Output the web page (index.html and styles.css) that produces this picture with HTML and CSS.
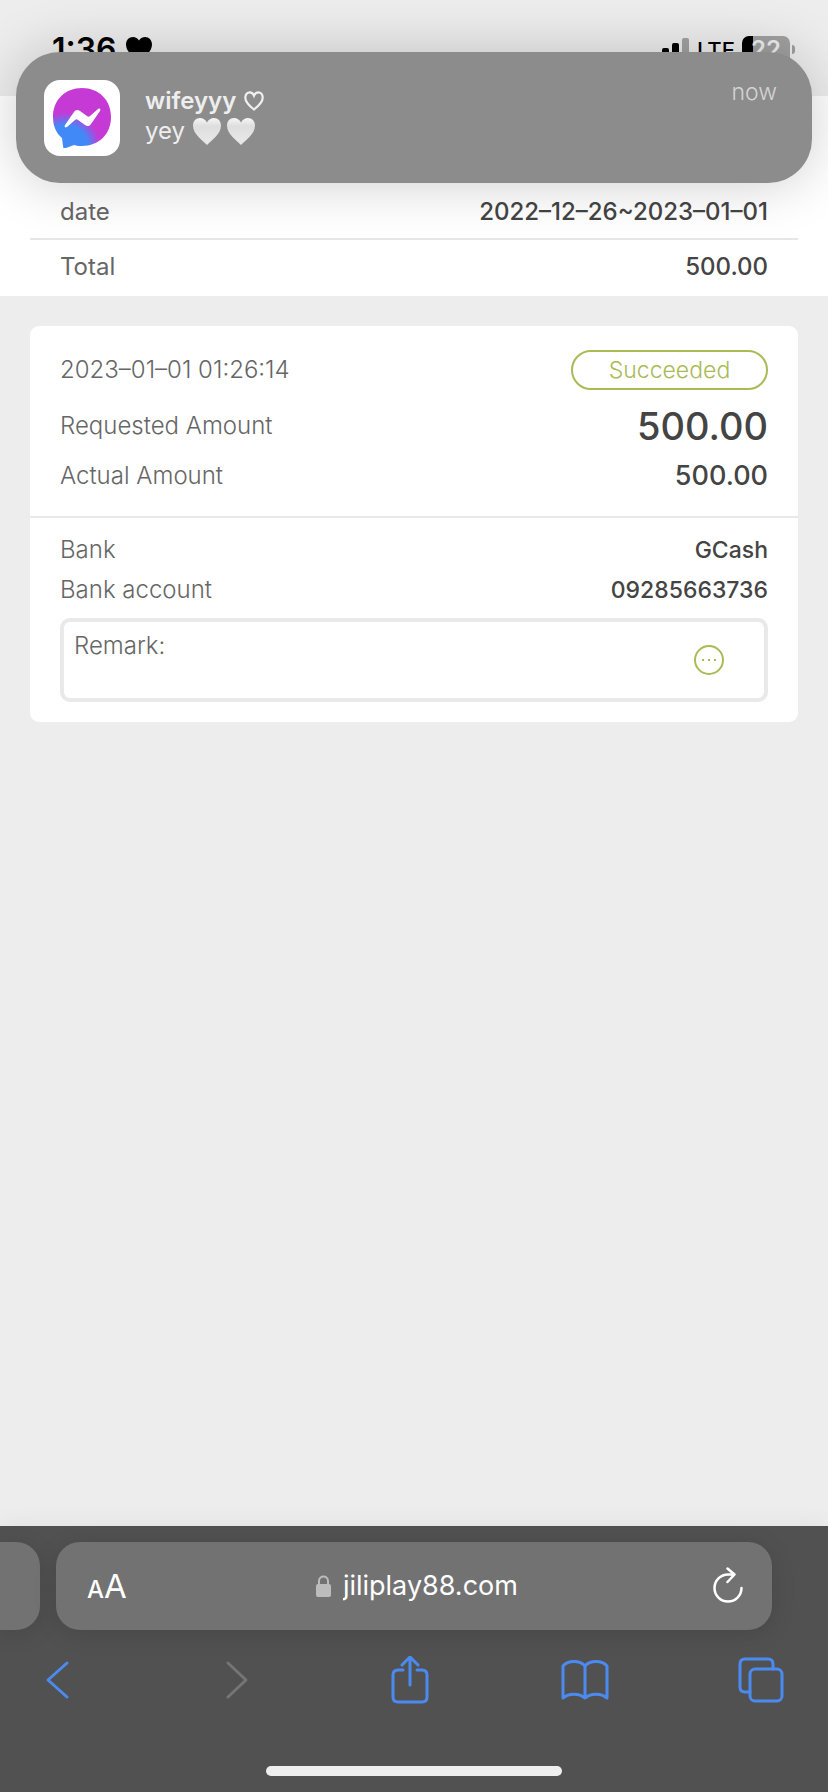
FILE: index.html
```html
<!DOCTYPE html>
<html lang="en">
<head>
  <meta charset="UTF-8">
  <meta name="viewport" content="width=device-width, initial-scale=1">
  <title>Withdrawal record</title>
  <link rel="stylesheet" href="styles.css">
</head>
<body>
  <header class="status-bar">
    <div class="status-left">
      <span class="time">1:36</span>
      <svg width="26" height="26" viewBox="0 0 26 26"><path d="M13 25C6 19 0 14 0 7.500C0 3 3 0 7 0c2.600 0 4.700 1.300 6 3.500C14.300 1.300 16.400 0 19 0c4 0 7 3 7 7.500C26 14 20 19 13 25z"/></svg>
    </div>
    <div class="status-right">
      <svg width="38" height="24" viewBox="0 0 38 24">
        <rect x="0" y="15" width="7" height="9" rx="2"/>
        <rect x="10" y="10" width="7" height="14" rx="2"/>
        <rect x="20" y="5" width="7" height="19" rx="2"/>
        <rect x="30" y="0" width="7" height="24" rx="2" fill="#a2a2a2"/>
      </svg>
      <span class="network">LTE</span>
      <div class="battery"><span>22</span></div>
    </div>
  </header>

  <aside class="notification">
    <div class="app-icon">
      <svg width="60" height="60" viewBox="0 0 60 60">
        <defs>
          <radialGradient id="bubble" cx="0.22" cy="1" r="0.700">
            <stop offset="0.550" stop-color="#4289f8"/>
            <stop offset="0.850" stop-color="#c53ad5"/>
          </radialGradient>
        </defs>
        <path d="M30 0C13 0 1 12 1 29c0 9 3 16 9 21l1 8c0 2 1 3 3 2l8-3c3 1 5 1 8 1c17 0 29-12 29-29S47 0 30 0z" fill="url(#bubble)"/>
        <path d="M13 37l9-13c1-2 4-3 6-1l7 5c1 1 2 1 3 0l8-7c2-1 3 0 2 2l-9 13c-1 2-4 3-6 1l-7-5c-1-1-2-1-3 0l-8 7c-2 1-3 0-2-2z" fill="#fff"/>
      </svg>
    </div>
    <div class="message">
      <div class="sender">wifeyyy
        <svg width="20" height="20" viewBox="0 0 20 20"><path d="M10 18.500C5 14.500 1.300 11 1.300 6.700c0-3.200 2-5.400 4.500-5.400c1.900 0 3.400 1.200 4.200 3.200c.8-2 2.300-3.200 4.200-3.200c2.500 0 4.500 2.200 4.500 5.400c0 4.300-3.700 7.800-8.700 11.800z" fill="none" stroke="#f0f0f0" stroke-width="2.200"/></svg>
      </div>
      <div class="text">yey
        <svg width="62" height="29" viewBox="0 0 62 29">
          <defs>
            <linearGradient id="heart" x1="0" y1="0" x2="0" y2="1">
              <stop offset="0" stop-color="#f6f6f6"/>
              <stop offset="0.300" stop-color="#dedede"/>
              <stop offset="1" stop-color="#e9e9e9"/>
            </linearGradient>
          </defs>
          <path d="M14 28C9 23 0 17 0 8.500C0 4 3 1 7 1c3 0 5.500 1.500 7 4.500C15.500 2.500 18 1 21 1c4 0 7 3 7 7.500C28 17 19 23 14 28z" fill="url(#heart)"/>
          <path d="M48 28C43 23 34 17 34 8.500C34 4 37 1 41 1c3 0 5.500 1.500 7 4.500C49.500 2.500 52 1 55 1c4 0 7 3 7 7.500C62 17 53 23 48 28z" fill="url(#heart)"/>
        </svg>
      </div>
    </div>
    <time class="when">now</time>
  </aside>

  <main>
    <section class="summary">
      <div class="summary-row">
        <span>date</span>
        <strong>2022–12–26~2023–01–01</strong>
      </div>
      <div class="summary-row">
        <span>Total</span>
        <strong>500.00</strong>
      </div>
    </section>

    <section class="card">
      <div class="amounts">
        <div class="row row-status">
          <time>2023–01–01 01:26:14</time>
          <span class="badge">Succeeded</span>
        </div>
        <div class="row row-requested">
          <span>Requested Amount</span>
          <strong class="big">500.00</strong>
        </div>
        <div class="row row-actual">
          <span>Actual Amount</span>
          <strong class="medium">500.00</strong>
        </div>
      </div>
      <div class="bank">
        <div class="row">
          <span>Bank</span>
          <strong>GCash</strong>
        </div>
        <div class="row">
          <span>Bank account</span>
          <strong>09285663736</strong>
        </div>
        <div class="remark">
          <span>Remark:</span>
          <button type="button" class="more" aria-label="Show remark">
            <svg width="30" height="30" viewBox="0 0 30 30">
              <circle cx="15" cy="15" r="14" fill="none" stroke="#a9ba56" stroke-width="2"/>
              <path d="M8 14h2v2H8zM14 14h2v2h-2zM20 14h2v2h-2z" fill="#a9ba56"/>
            </svg>
          </button>
        </div>
      </div>
    </section>
  </main>

  <footer class="browser-bar">
    <div class="tabs">
      <div class="prev-tab"></div>
      <div class="address-bar">
        <button type="button" class="text-size" aria-label="Page settings"><span class="small-a">A</span>A</button>
        <div class="address">
          <svg width="15" height="22" viewBox="0 0 15 22">
            <path d="M3 10V6c0-6 9-6 9 0v4" fill="none" stroke="#bcbcbc" stroke-width="2"/>
            <rect y="9" width="15" height="13" rx="2" fill="#bcbcbc"/>
          </svg>
          <input type="text" value="jiliplay88.com" aria-label="Address">
        </div>
        <button type="button" class="reload" aria-label="Reload">
          <svg width="32" height="38" viewBox="0 0 32 38" fill="none" stroke="#fff" stroke-width="2.500" stroke-linecap="round" stroke-linejoin="round">
            <path d="M22 7.500H16A13.500 13.500 0 1 0 29.500 21M15.500 1.500l7 6-7 7.500"/>
          </svg>
        </button>
      </div>
    </div>
    <nav class="toolbar">
      <button type="button" aria-label="Back">
        <svg width="48" height="48" viewBox="0 0 48 48"><path d="M34 7L15 24l19 17"/></svg>
      </button>
      <button type="button" aria-label="Forward" disabled>
        <svg width="48" height="48" viewBox="0 0 48 48"><path d="M19 7l18 17-18 17"/></svg>
      </button>
      <button type="button" aria-label="Share">
        <svg width="48" height="48" viewBox="0 0 48 48"><path d="M18 14h-5q-5 0-5 5v22q0 5 5 5h24q5 0 5-5V19q0-5-5-5h-5M25 29V2M17 9l8-8 8 8"/></svg>
      </button>
      <button type="button" aria-label="Bookmarks">
        <svg width="48" height="48" viewBox="0 0 48 48"><path d="M24 10C19 4 7 4 2 10v32c6-5 16-5 22 0 6-5 16-5 22 0V10C41 4 29 4 24 10zM24 10v32"/></svg>
      </button>
      <button type="button" aria-label="Tabs">
        <svg width="48" height="48" viewBox="0 0 48 48"><path d="M13 36H8q-5 0-5-5V8q0-5 5-5h23q5 0 5 5v5"/><rect x="13" y="13" width="32" height="32" rx="5"/></svg>
      </button>
    </nav>
    <div class="home-indicator"></div>
  </footer>
</body>
</html>
```
FILE: styles.css
```css
* {
  box-sizing: border-box;
}

body {
  margin: 0;
  min-height: 100vh;
  display: flex;
  flex-direction: column;
  background: #ededed;
  color: #666;
  font-family: Inter, "Liberation Sans", sans-serif;
  font-size: 24px;
  font-weight: 300;
  line-height: 32px;
  overflow-x: hidden;
}

svg {
  display: block;
}

button {
  border: none;
  padding: 0;
  background: none;
  color: inherit;
  font: inherit;
  cursor: pointer;
}

strong {
  color: #444;
  font-weight: 500;
}

/* status bar */
.status-bar {
  height: 96px;
  padding: 32px 38px 0 52px;
  display: flex;
  justify-content: space-between;
  align-items: flex-start;
  color: #000;
}

.status-left,
.status-right {
  display: flex;
  align-items: center;
  height: 36px;
}

.status-left {
  gap: 9px;
}

.status-right {
  gap: 7px;
}

.time {
  font-size: 32px;
  font-weight: 600;
}

.network {
  font-size: 22px;
  font-weight: 500;
}

.battery {
  position: relative;
  width: 48px;
  height: 28px;
  border-radius: 7px;
  background: linear-gradient(to right, #000 11px, #a0a0a0 11px);
  color: #ededed;
  font-size: 24px;
  font-weight: 600;
  line-height: 28px;
  text-align: center;
}

.battery::after {
  content: "";
  position: absolute;
  top: 9px;
  right: -5px;
  width: 3px;
  height: 9px;
  border-radius: 0 3px 3px 0;
  background: #a0a0a0;
}

/* notification banner over the page */
.notification {
  position: absolute;
  top: 52px;
  left: 16px;
  right: 16px;
  z-index: 10;
  display: flex;
  align-items: flex-start;
  gap: 25px;
  padding: 28px 35px 27px 28px;
  border-radius: 44px;
  background: #8c8c8c;
  box-shadow: 0 0 56px rgba(0, 0, 0, 0.2);
  color: #eee;
}

.app-icon {
  width: 76px;
  height: 76px;
  padding: 8px;
  border-radius: 16px;
  background: #fff;
}

.message {
  flex: 1;
  padding-top: 6px;
  line-height: 30px;
}

.sender,
.text {
  display: flex;
  align-items: center;
  gap: 8px;
  font-size: 24px;
}

.sender {
  font-weight: 600;
}

.text {
  font-weight: 400;
}

.when {
  font-size: 23px;
  line-height: 24px;
  color: #d4d4d4;
}

/* summary */
.summary {
  padding: 88px 30px 0;
  background: #fff;
}

.summary-row {
  display: flex;
  justify-content: space-between;
  padding: 12px 30px 10px;
}

.summary-row:last-child {
  padding: 11px 30px 13px;
  border-top: 2px solid #e6e6e6;
}

.summary-row span {
  font-weight: 400;
}

/* record card */
.card {
  margin: 30px;
  border-radius: 9px;
  background: #fff;
}

.card strong {
  font-size: 23px;
}

.amounts {
  padding: 24px 30px 14px;
  border-bottom: 2px solid #e9e9e9;
}

.bank {
  padding: 12px 30px 20px;
}

.row {
  display: flex;
  justify-content: space-between;
  align-items: center;
  height: 40px;
}

.row-requested {
  height: 72px;
}

.row-actual {
  height: 28px;
  margin-bottom: 12px;
}

.card .big {
  font-size: 38px;
}

.card .medium {
  font-size: 27px;
}

.badge {
  width: 197px;
  border: 2px solid #a9ba56;
  border-radius: 20px;
  color: #a9ba56;
  font-size: 23px;
  line-height: 36px;
  text-align: center;
}

.remark {
  display: flex;
  justify-content: space-between;
  align-items: flex-start;
  min-height: 84px;
  margin-top: 8px;
  padding: 8px 40px 8px 10px;
  border: 4px solid #e9e9e9;
  border-radius: 10px;
}

.more {
  align-self: center;
}

/* browser chrome */
.browser-bar {
  margin-top: auto;
  padding: 16px 0;
  background: #515151;
  box-shadow: 0 0 24px rgba(0, 0, 0, 0.06);
  color: #fff;
}

.tabs {
  display: flex;
  gap: 16px;
  padding-right: 56px;
}

.prev-tab {
  width: 40px;
  border-radius: 0 24px 24px 0;
  background: #727272;
  box-shadow: 0 4px 24px rgba(0, 0, 0, 0.12);
}

.address-bar {
  flex: 1;
  display: flex;
  justify-content: space-between;
  align-items: center;
  height: 88px;
  padding: 0 28px 0 31px;
  border-radius: 24px;
  background: #727272;
  box-shadow: 0 4px 24px rgba(0, 0, 0, 0.12);
}

.text-size {
  padding-top: 3px;
  font-size: 33px;
  font-weight: 400;
}

.small-a {
  font-size: 24px;
  font-weight: 500;
}

.address {
  display: flex;
  align-items: center;
  gap: 12px;
}

.address input {
  width: 180px;
  padding: 0;
  border: none;
  outline: none;
  background: none;
  color: #fff;
  font: inherit;
  font-size: 27px;
  font-weight: 400;
}

.toolbar {
  display: flex;
  justify-content: space-between;
  padding: 26px 43px 0 33px;
}

.toolbar svg {
  fill: none;
  stroke: #4b8bf0;
  stroke-width: 3;
  stroke-linecap: round;
  stroke-linejoin: round;
}

.toolbar button:disabled svg {
  stroke: #757575;
}

.home-indicator {
  width: 296px;
  height: 10px;
  margin: 62px auto 0;
  border-radius: 5px;
  background: #eee;
}
```
